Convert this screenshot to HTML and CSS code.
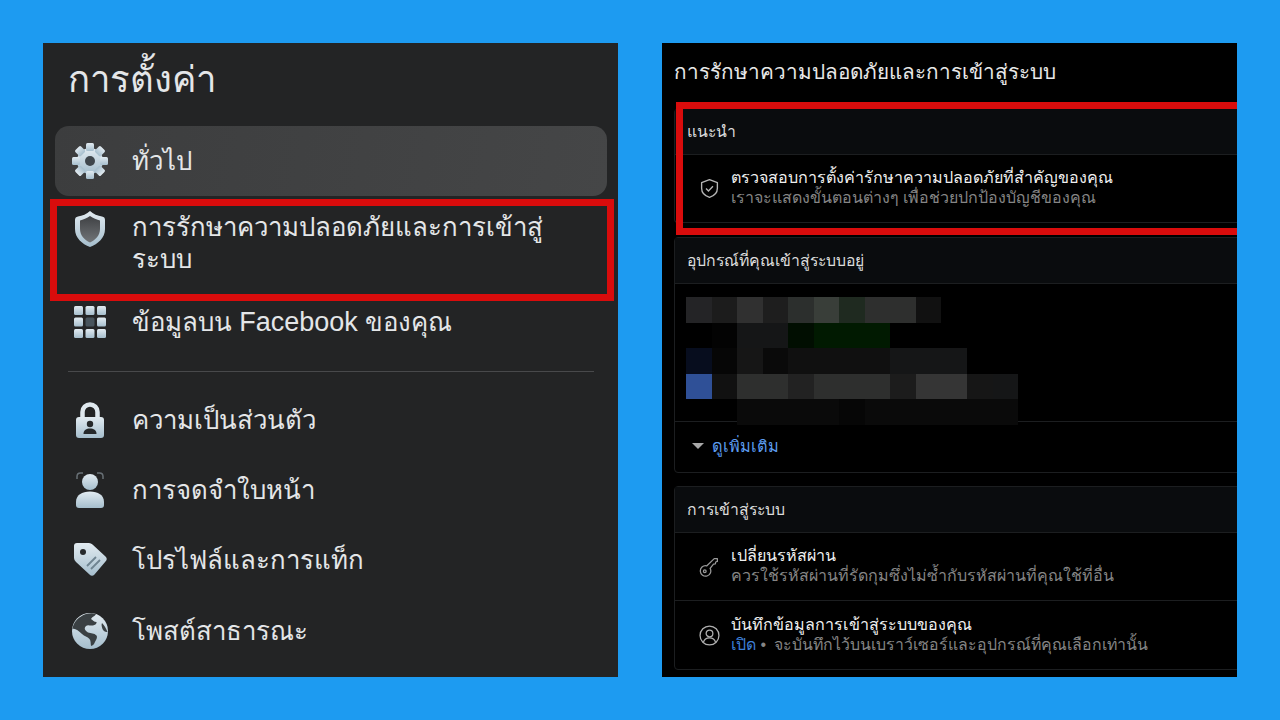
FILE: index.html
```html
<!DOCTYPE html>
<html lang="th">
<head>
    <meta charset="UTF-8">
    <title>การตั้งค่า</title>
    <link rel="stylesheet" href="styles.css">
</head>
<body>

<svg class="defs" width="0" height="0" aria-hidden="true">
    <defs>
        <linearGradient id="icon-fill" x1="0" y1="0" x2="0" y2="1">
            <stop offset="0" stop-color="#e2ebf1"/>
            <stop offset="1" stop-color="#a5becd"/>
        </linearGradient>
        <linearGradient id="shield-fill" x1="0" y1="0" x2="0" y2="1">
            <stop offset="0" stop-color="#3f4144"/>
            <stop offset="1" stop-color="#717477"/>
        </linearGradient>
    </defs>
</svg>

<div class="stage">
    <!-- แผงซ้าย: เมนูการตั้งค่าบนมือถือ -->
    <section class="panel panel-menu">
        <h1 class="menu-title">การตั้งค่า</h1>
        <ul class="menu">
            <li class="menu-item active">
                <svg class="menu-icon" viewBox="0 0 36 36">
                    <g fill="url(#icon-fill)">
                        <circle cx="18" cy="18" r="13"/>
                        <rect x="14" y="0" width="8" height="8" rx="1.500"/>
                        <rect x="14" y="28" width="8" height="8" rx="1.500"/>
                        <rect x="0" y="14" width="8" height="8" rx="1.500"/>
                        <rect x="28" y="14" width="8" height="8" rx="1.500"/>
                        <rect x="14" y="0" width="8" height="8" rx="1.500" transform="rotate(45 18 18)"/>
                        <rect x="14" y="0" width="8" height="8" rx="1.500" transform="rotate(135 18 18)"/>
                        <rect x="14" y="0" width="8" height="8" rx="1.500" transform="rotate(225 18 18)"/>
                        <rect x="14" y="0" width="8" height="8" rx="1.500" transform="rotate(315 18 18)"/>
                    </g>
                    <circle cx="18" cy="18" r="5" fill="#3f464c"/>
                </svg>
                <span>ทั่วไป</span>
            </li>
            <li class="menu-item top">
                <svg class="menu-icon" viewBox="0 0 36 36">
                    <path fill="url(#icon-fill)" d="M18 0c3 3 8 5 12 5.500 2 .3 3 1.500 3 3.500v9c0 9-7 15-15 18C10 33 3 27 3 18V9c0-2 1-3.200 3-3.500C10 5 15 3 18 0z"/>
                    <path fill="url(#shield-fill)" d="M18 5C15 7 11 9 8 9.500V18c0 6.500 4.500 11 10 13.500 5.500-2.500 10-7 10-13.500V9.500C25 9 21 7 18 5z"/>
                </svg>
                <span>การรักษาความปลอดภัยและการเข้าสู่<br>ระบบ</span>
            </li>
            <li class="menu-item facebook">
                <svg class="menu-icon" viewBox="0 0 36 36">
                    <g fill="url(#icon-fill)">
                        <rect x="2" y="2" width="9" height="9" rx="1.500"/>
                        <rect x="13.500" y="2" width="9" height="9" rx="1.500"/>
                        <rect x="25" y="2" width="9" height="9" rx="1.500"/>
                        <rect x="2" y="13.500" width="9" height="9" rx="1.500"/>
                        <rect x="25" y="13.500" width="9" height="9" rx="1.500"/>
                        <rect x="2" y="25" width="9" height="9" rx="1.500"/>
                        <rect x="13.500" y="25" width="9" height="9" rx="1.500"/>
                        <rect x="25" y="25" width="9" height="9" rx="1.500"/>
                    </g>
                    <rect x="13.500" y="13.500" width="9" height="9" rx="1.500" fill="#48545c"/>
                </svg>
                <span>ข้อมูลบน <span class="brand">Facebook</span> ของคุณ</span>
            </li>
        </ul>
        <hr class="menu-line">
        <ul class="menu menu-lower">
            <li class="menu-item">
                <svg class="menu-icon" viewBox="0 0 36 36">
                    <path fill="none" stroke="#dfe8ee" stroke-width="4.500" d="M10.500 17V10a7.500 7.500 0 0 1 15 0v7"/>
                    <rect x="4" y="15" width="28" height="21" rx="3" fill="url(#icon-fill)"/>
                    <circle cx="18" cy="22" r="3.200" fill="#26292b"/>
                    <path fill="#26292b" d="M11.500 32c0-4 3-5.500 6.500-5.500s6.500 1.500 6.500 5.500z"/>
                </svg>
                <span>ความเป็นส่วนตัว</span>
            </li>
            <li class="menu-item">
                <svg class="menu-icon" viewBox="0 0 36 36">
                    <path fill="none" stroke="#687076" stroke-width="1.500" d="M5 7V4.500Q5 1 8.500 1H11M25 1h2.500Q31 1 31 4.500V7"/>
                    <circle cx="18" cy="10" r="8" fill="url(#icon-fill)"/>
                    <path fill="url(#icon-fill)" d="M4 33v-3c0-7 6-10.500 14-10.500S32 23 32 30v3q0 3-3 3H7q-3 0-3-3z"/>
                </svg>
                <span>การจดจำใบหน้า</span>
            </li>
            <li class="menu-item">
                <svg class="menu-icon" viewBox="0 0 36 36">
                    <path fill="url(#icon-fill)" d="M5 1h12q2 0 3.500 1.500l13 12q2.500 2.500 0 5l-11 13q-2.500 2.500-5 0L4 20q-2-2-2-4V4q0-3 3-3z"/>
                    <circle cx="11" cy="10" r="3" fill="#26292b"/>
                    <path fill="none" stroke="#6f8491" stroke-width="1.800" d="M15 24l9-9M19 27l9-9"/>
                </svg>
                <span>โปรไฟล์และการแท็ก</span>
            </li>
            <li class="menu-item">
                <svg class="menu-icon" viewBox="0 0 36 36">
                    <circle cx="18" cy="18" r="18" fill="url(#icon-fill)"/>
                    <path fill="#3a4043" d="M9 3.500C13 .5 20-.5 24 1c-1 2.500-4 2.500-5 5 2 1 3 3 5.500 3 .5 2-1.500 3-3.500 3.500-3 .5-5-1-7 .5-2.500 2-1 5 2 6.500 3 1 6 .5 8.500 3 1.500 2-1 5-2 7.500-.5 1.500-2 2.500-3.500 3-.5-2.500 0-5-1.500-7-2-2.500-5-2.500-7.500-5C6.500 18 3 15 .5 16c.5-5 4-10 8.500-12.500z"/>
                    <path fill="#3a4043" d="M30 10c2 2 4 5 5.500 9-2 .5-4-1-5-3-.5-2-1.500-4-.5-6z"/>
                </svg>
                <span>โพสต์สาธารณะ</span>
            </li>
        </ul>
        <div class="mark mark-menu"></div>
    </section>

    <!-- แผงขวา: หน้าการรักษาความปลอดภัยบนเว็บ -->
    <section class="panel panel-page">
        <h2 class="page-title">การรักษาความปลอดภัยและการเข้าสู่ระบบ</h2>

        <div class="card card-first">
            <h3 class="card-head">แนะนำ</h3>
            <div class="card-row">
                <svg class="row-icon" viewBox="0 0 20 20">
                    <path fill="none" stroke="#b5b5b5" stroke-width="1.300" stroke-linejoin="round" d="M10 1.500l7.500 2.800v5.500c0 4.400-3.200 7.300-7.500 8.700-4.300-1.400-7.500-4.300-7.500-8.700V4.300z"/>
                    <path fill="none" stroke="#b5b5b5" stroke-width="1.300" d="M6.700 10l2.300 2.300 4.300-4.500"/>
                </svg>
                <div class="row-text">
                    <div class="row-title">ตรวจสอบการตั้งค่ารักษาความปลอดภัยที่สำคัญของคุณ</div>
                    <div class="row-sub">เราจะแสดงขั้นตอนต่างๆ เพื่อช่วยปกป้องบัญชีของคุณ</div>
                </div>
            </div>
        </div>

        <div class="card card-devices">
            <h3 class="card-head">อุปกรณ์ที่คุณเข้าสู่ระบบอยู่</h3>
            <div class="device-list">
                <div class="mosaic">
                    <i class="m24"></i><i class="m1c"></i><i class="m30"></i><i class="m1e"></i><i class="m2c"></i><i class="m39"></i><i class="mg2"></i><i class="m2e"></i><i class="m2e"></i><i class="m11"></i><i></i><i></i><i></i><i></i>
                    <i></i><i class="m03"></i><i class="m15"></i><i class="m15"></i><i class="mg0"></i><i class="mg1"></i><i class="mg1"></i><i class="mg1"></i><i></i><i></i><i></i><i></i><i></i><i></i>
                    <i class="mb0"></i><i class="m06"></i><i class="m16"></i><i class="m0a"></i><i class="m10"></i><i class="m10"></i><i class="m10"></i><i class="m10"></i><i class="m15"></i><i class="m15"></i><i class="m15"></i><i></i><i></i><i></i>
                    <i class="mb1"></i><i class="m11"></i><i class="m2e"></i><i class="m2e"></i><i class="m22"></i><i class="m2e"></i><i class="m2e"></i><i class="m2e"></i><i class="m1c"></i><i class="m35"></i><i class="m35"></i><i class="m16"></i><i class="m15"></i><i></i>
                    <i></i><i></i><i class="m0a"></i><i class="m0a"></i><i class="m0a"></i><i class="m0a"></i><i class="m06"></i><i class="m0a"></i><i class="m0a"></i><i class="m0a"></i><i class="m0a"></i><i class="m0a"></i><i class="m0a"></i><i></i>
                </div>
            </div>
            <div class="more-row">
                <span class="caret"></span>
                <a class="more-link">ดูเพิ่มเติม</a>
            </div>
        </div>

        <div class="card card-login">
            <h3 class="card-head">การเข้าสู่ระบบ</h3>
            <div class="card-row">
                <svg class="row-icon" viewBox="0 0 20 20">
                    <g fill="none" stroke="#9a9a9a" stroke-width="1.200" stroke-linejoin="round">
                        <path d="M8.500 8.300L15.500 1.500h3v2.700l-1.600.5-.3 1.800-1.800.3-3.200 4a5 5 0 1 1-3.600-2.500z" transform="translate(-1 1)"/>
                        <circle cx="5.500" cy="14.500" r="1.300"/>
                    </g>
                </svg>
                <div class="row-text">
                    <div class="row-title">เปลี่ยนรหัสผ่าน</div>
                    <div class="row-sub">ควรใช้รหัสผ่านที่รัดกุมซึ่งไม่ซ้ำกับรหัสผ่านที่คุณใช้ที่อื่น</div>
                </div>
            </div>
            <div class="card-row">
                <svg class="row-icon" viewBox="0 0 20 20">
                    <g fill="none" stroke="#b0b0b0" stroke-width="1.200">
                        <circle cx="10" cy="10" r="9"/>
                        <circle cx="10" cy="8" r="3.200"/>
                        <path d="M4.200 16.500c.8-3 3-4.300 5.800-4.300s5 1.300 5.800 4.300"/>
                    </g>
                </svg>
                <div class="row-text">
                    <div class="row-title">บันทึกข้อมูลการเข้าสู่ระบบของคุณ</div>
                    <div class="row-sub"><span class="on">เปิด</span> • <span class="note">จะบันทึกไว้บนเบราว์เซอร์และอุปกรณ์ที่คุณเลือกเท่านั้น</span></div>
                </div>
            </div>
        </div>
        <div class="mark mark-page"></div>
    </section>
</div>

</body>
</html>
```

FILE: styles.css
```css
:root {
    --sky: #1d9bf1;
    --mark-red: #d90c0c;
    --menu-bg: #232425;
    --menu-text: #e4e6e8;
    --page-line: #1c1e20;
    --card-head-bg: #0a0c0e;
    --sub-text: #858585;
}
html {
    box-sizing: border-box;
}
*, *:before, *:after {
    box-sizing: inherit;
}
body {
    margin: 0;
    width: 1280px;
    height: 720px;
    overflow: hidden;
    background: var(--sky);
    font-family: "Liberation Sans", "Noto Sans", "DejaVu Sans", sans-serif;
}
.defs {
    position: absolute;
}
.stage {
    display: flex;
    gap: 44px;
    padding: 43px;
    height: 720px;
}
.panel {
    position: relative;
    width: 575px;
    height: 634px;
    overflow: hidden;
}
h1, h2, h3, ul {
    margin: 0;
    padding: 0;
    font-weight: normal;
}
ul {
    list-style: none;
}

/* เมนูซ้าย */
.panel-menu {
    background: var(--menu-bg);
    padding: 0 11px 0 12px;
    color: var(--menu-text);
}
.menu-title {
    height: 83px;
    padding: 12px 0 0 13px;
    font-size: 36.500px;
    line-height: 50px;
}
.menu-item {
    display: flex;
    align-items: center;
    gap: 24px;
    padding: 0 17px;
    height: 70px;
    font-size: 25.800px;
    line-height: 32px;
}
.menu-item.active {
    background: linear-gradient(100deg, #3c3d3e, #454647);
    border-radius: 14px;
}
.menu-item.top {
    align-items: flex-start;
    height: 94px;
    padding-top: 15px;
}
.menu-item.facebook {
    height: 64px;
}
.menu-lower .menu-item:last-child {
    padding-top: 2px;
}
.brand {
    font-size: 27px;
}
.menu-icon {
    flex: none;
    width: 36px;
    height: 36px;
}
.menu-line {
    margin: 17px 13px 13px;
    border: 0;
    border-top: 1px solid #48494b;
}
.mark {
    position: absolute;
    border: 7px solid var(--mark-red);
    pointer-events: none;
}
.mark-menu {
    left: 7px;
    top: 156px;
    width: 564px;
    height: 102px;
}

/* หน้าเว็บขวา */
.panel-page {
    background: #000;
    padding: 0 0 0 12px;
    color: #e8e8e8;
}
.page-title {
    height: 66px;
    padding-top: 11px;
    font-size: 20.700px;
    line-height: 36px;
}
.card {
    margin-right: -12px;
    border: 1px solid var(--page-line);
    border-radius: 4px;
    margin-bottom: 13px;
}
.card-first {
    margin-bottom: 14px;
    border-top: 0;
}
.card-first .card-row {
    height: 67px;
}
.card-head {
    height: 46px;
    padding-left: 12px;
    background: var(--card-head-bg);
    border-bottom: 1px solid var(--page-line);
    font-size: 15.800px;
    line-height: 46px;
    color: #dcdcdc;
}
.card-row {
    display: flex;
    align-items: center;
    gap: 11px;
    height: 68px;
    padding: 0 0 0 24px;
    border-bottom: 1px solid var(--page-line);
}
.card-row:last-child {
    border-bottom: 0;
}
.row-icon {
    flex: none;
    width: 21px;
    height: 21px;
}
.row-text {
    padding-bottom: 2px;
}
.row-title {
    font-size: 16.100px;
    line-height: 20px;
    color: #efefef;
}
.row-sub {
    margin-top: 1px;
    font-size: 16px;
    line-height: 20px;
    color: var(--sub-text);
}
.row-sub .on {
    color: #3d7fd6;
}
.row-sub .note {
    margin-left: 3px;
    font-size: 15.850px;
}
.device-list {
    height: 138px;
    padding: 13px 0 0 11px;
    border-bottom: 1px solid var(--page-line);
}
.mosaic {
    display: grid;
    grid-template-columns: repeat(14, 25.550px);
    grid-template-rows: repeat(5, 25.600px);
}
.m03 { background: #030303; }
.m06 { background: #060606; }
.m0a { background: #0a0a0a; }
.m10 { background: #101010; }
.m11 { background: #111111; }
.m15 { background: #151617; }
.m16 { background: #161616; }
.m1c { background: #1c1c1c; }
.m1e { background: #1e1e1e; }
.m22 { background: #222222; }
.m24 { background: #242426; }
.m2c { background: #2c2f2d; }
.m2e { background: #2e2f2e; }
.m30 { background: #303030; }
.m35 { background: #353535; }
.m39 { background: #393e39; }
.mg0 { background: #010e01; }
.mg1 { background: #011a01; }
.mg2 { background: #1f2a20; }
.mb0 { background: #070d1e; }
.mb1 { background: #2f5097; }
.more-row {
    display: flex;
    align-items: center;
    gap: 8px;
    height: 50px;
    padding: 0 0 3px 17px;
}
.caret {
    width: 0;
    height: 0;
    border-left: 6px solid transparent;
    border-right: 6px solid transparent;
    border-top: 6px solid #a8a8a8;
}
.more-link {
    font-size: 16.300px;
    color: #5c9cf0;
}
.mark-page {
    left: 14px;
    top: 59px;
    width: 600px;
    height: 133px;
}
```
